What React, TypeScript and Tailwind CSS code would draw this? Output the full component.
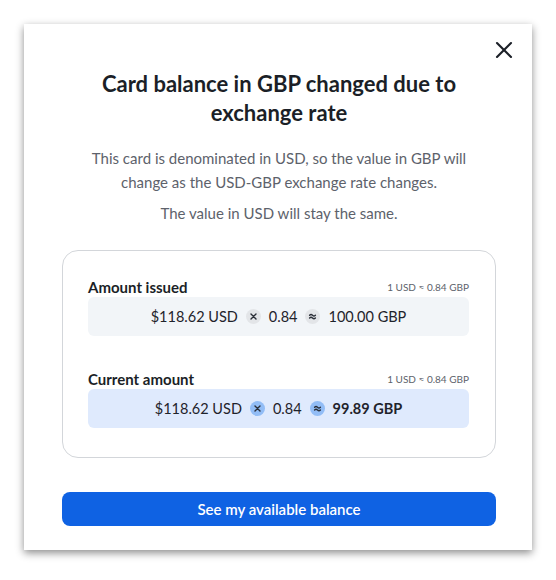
import { X } from "lucide-react";

function Op({ sym, tone }: { sym: "times" | "approx"; tone: "gray" | "blue" }) {
  return (
    <span
      className={
        "mx-[8px] inline-grid size-[15px] place-items-center rounded-full text-[#2a2f38] " +
        (tone === "gray" ? "bg-[#e3e5e8]" : "bg-[#92bdf6]")
      }
    >
      <svg width="15" height="15" viewBox="0 0 15 15" fill="none" stroke="currentColor" strokeWidth="1.4" strokeLinecap="round">
        {sym === "times" ? (
          <path d="M5 5l5 5M10 5l-5 5" />
        ) : (
          <path d="M4.6 6.3c1-1 1.9-1 2.9 0s1.9 1 2.9 0M4.6 9c1-1 1.9-1 2.9 0s1.9 1 2.9 0" />
        )}
      </svg>
    </span>
  );
}

function AmountRow({
  label,
  result,
  tone,
}: {
  label: string;
  result: string;
  tone: "gray" | "blue";
}) {
  return (
    <div>
      <div className="flex items-end justify-between">
        <h3 className="text-[15px] font-bold leading-5 text-[#1b1f27]">{label}</h3>
        <span className="pb-[2px] text-[10px] text-[#5d626b]">1 USD ≈ 0.84 GBP</span>
      </div>
      <div
        className={
          "flex h-[39px] items-center justify-center rounded-md text-[14.5px] text-[#1f232b] " +
          (tone === "gray" ? "bg-[#f2f5f8]" : "bg-[#dfeafd]")
        }
      >
        <span>$118.62 USD</span>
        <Op sym="times" tone={tone} />
        <span>0.84</span>
        <Op sym="approx" tone={tone} />
        <span className={tone === "blue" ? "font-bold" : ""}>{result}</span>
      </div>
    </div>
  );
}

export default function App() {
  return (
    <div className="min-h-[580px] bg-white p-6" style={{ fontFamily: "Lato, 'Open Sans', sans-serif" }}>
      <div className="relative h-[526px] w-[508px] bg-white pl-[38px] pr-[36px] pt-[45px] shadow-[0_3px_8px_rgba(0,0,0,0.45)]">
        <button className="absolute right-[14px] top-[12px] text-[#1b1f27]">
          <X size={28} strokeWidth={1.8} />
        </button>
        <h2 className="px-8 text-center text-[22px] font-bold leading-[29px] text-[#1b1f27]">
          Card balance in GBP changed due to exchange rate
        </h2>
        <p className="mt-[19px] px-4 text-center text-[15px] leading-6 text-[#5d626b]">
          This card is denominated in USD, so the value in GBP will change as the USD-GBP exchange rate changes.
        </p>
        <p className="mt-[7px] text-center text-[15px] leading-6 text-[#5d626b]">
          The value in USD will stay the same.
        </p>
        <div className="mt-[25px] flex h-[208px] flex-col gap-[33px] rounded-2xl border border-[#d3d6da] pl-[25px] pr-[26px] pt-[26px]">
          <AmountRow label="Amount issued" result="100.00 GBP" tone="gray" />
          <AmountRow label="Current amount" result="99.89 GBP" tone="blue" />
        </div>
        <button className="mt-[34px] h-[34px] w-full rounded-lg bg-[#0f62e3] text-[15px] font-semibold text-white">
          See my available balance
        </button>
      </div>
    </div>
  );
}
